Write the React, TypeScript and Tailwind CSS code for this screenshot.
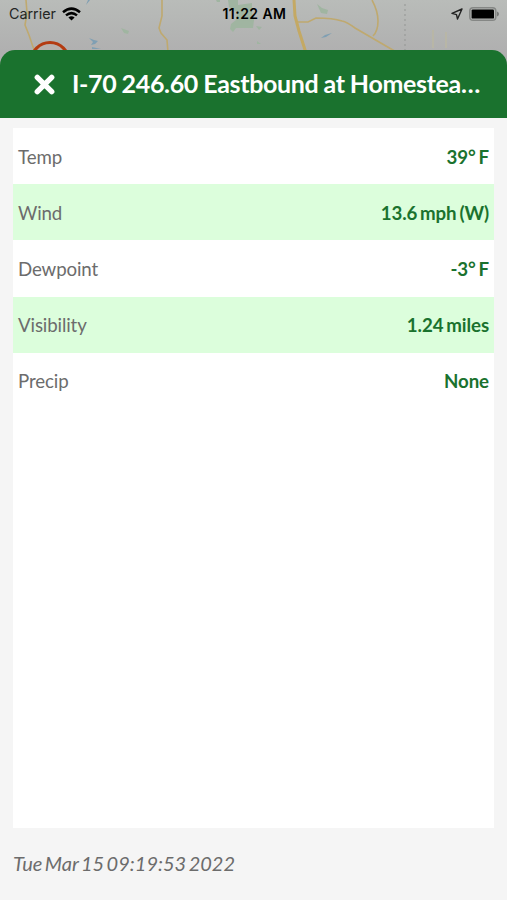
const readings = [
  { label: 'Temp', value: '39° F' },
  { label: 'Wind', value: '13.6 mph (W)' },
  { label: 'Dewpoint', value: '-3° F' },
  { label: 'Visibility', value: '1.24 miles' },
  { label: 'Precip', value: 'None' },
];

function MapBackdrop() {
  return (
    <svg className="absolute inset-0 h-[76px] w-full" viewBox="0 0 507 76" fill="none" aria-hidden="true">
      <defs>
        <linearGradient id="shade" x1="0" y1="0" x2="0" y2="1">
          <stop offset="0" stopColor="#b9bcb9" />
          <stop offset="0.66" stopColor="#b0b0b0" />
        </linearGradient>
      </defs>
      <rect width="507" height="76" fill="url(#shade)" />
      <g fill="#a0b5a1">
        <path d="M228 0h10v5l14-2v10l2 7-1 8h-17l-3 4-3-3 1-5 5-4 1-8-8-5zM216 0h4v2h-3z" />
        <path d="M121 28l8 3-1 3-4-1zM317 4l5 4 6 2-1 4-6-1zM256 26l6 1-3 3zM257 41l4 3h-4z" />
      </g>
      <g stroke="#bfa96f" strokeWidth="1.6">
        <path d="M26 0l1 13-2 12 4 10 4 12 8 15" />
        <path d="M162 0v16l-3 12 2 5 6 7 1 12" />
        <path d="M298 22h10l8-4q17 0 26 3 5 1 13 7l43 25" />
        <path d="M372 0q6 11 6 21 0 10-5 15" />
      </g>
      <path d="M294 0l1 16 4 15 7 22" stroke="#c4a964" strokeWidth="3" />
      <path d="M405 4v52" stroke="#939593" strokeDasharray="2 3" />
      <path d="M433 30v18M446 32v16" stroke="#b8b6a6" strokeWidth="2" />
      <g fill="#7f9fb3">
        <path d="M89 38l5 2 4 1-3 3-4 1 2-3zM321 38l4-3 7-2-6 4zM92 47l9 2h-9zM90 0l-4 5 2-5z" />
      </g>
      <circle cx="50" cy="61.5" r="19" stroke="#b43b10" strokeWidth="3.2" fill="#b7b0ac" />
    </svg>
  );
}

function StatusBar() {
  return (
    <div className="relative flex h-[27px] items-center justify-between pr-[7px] pl-[9px] font-['Inter','Liberation_Sans',sans-serif] text-[14.3px] text-black">
      <div className="flex w-40 items-center gap-[6px]">
        <span className="text-[#242624]">Carrier</span>
        <svg className="h-[14px] w-[19px]" viewBox="0 0 19 14" fill="none" stroke="#000" strokeWidth="2.5" aria-hidden="true">
          <path d="M1 5.2Q9.5-2 18 5.2M4 8.4q5.5-4.6 11 0" />
          <path d="M9.5 13.5L6.4 10.5q3.1-2.5 6.2 0z" fill="#000" stroke="none" />
        </svg>
      </div>
      <span className="text-[14px] font-semibold tracking-[0.45px]">11:22 AM</span>
      <div className="flex w-40 items-center justify-end gap-[6px]">
        <svg className="h-3 w-3" viewBox="0 0 12 12" fill="none" stroke="#222" strokeWidth="1.4" strokeLinejoin="round" aria-hidden="true">
          <path d="M11 1L1 5.4l4.5 1.3L6.5 11z" />
        </svg>
        <svg className="h-[14px] w-[31px]" viewBox="0 0 31 14" fill="none" aria-hidden="true">
          <rect x=".8" y=".8" width="26" height="12.4" rx="3.3" stroke="#858785" strokeWidth="1.5" />
          <rect x="2.6" y="2.4" width="22.4" height="9.2" rx="1.2" fill="#000" />
          <path d="M28 4.6q2 .6 2 2.4t-2 2.4z" fill="#777977" />
        </svg>
      </div>
    </div>
  );
}

export default function App() {
  return (
    <div className="relative flex h-[900px] w-[507px] flex-col overflow-hidden bg-[#f5f5f5] font-['Lato','Liberation_Sans',sans-serif]">
      <MapBackdrop />
      <StatusBar />
      <header className="relative mt-[23px] flex h-[68px] shrink-0 items-center rounded-t-[15px] bg-[#1a722e] pl-[34px] text-white">
        <button type="button" aria-label="Close" className="mr-[17px] flex">
          <svg className="h-[21px] w-[21px]" viewBox="0 0 21 21" stroke="currentColor" strokeWidth="5.4" strokeLinecap="round" aria-hidden="true">
            <path d="M3.3 3.3l14.4 14.4M17.7 3.3L3.3 17.7" />
          </svg>
        </button>
        <h1 className="pb-[3px] text-[25px] leading-8 font-bold tracking-[-0.33px] whitespace-nowrap [word-spacing:-0.6px]">I-70 246.60 Eastbound at Homestea…</h1>
      </header>
      <main className="relative mx-[13px] mt-[10px] h-[700px] bg-white">
        {readings.map(({ label, value }) => (
          <div key={label} className="flex h-[56.2px] items-center justify-between px-[5px] pt-px text-[18.7px] even:bg-[#dcfedc]">
            <span className="tracking-[-0.12px] text-[#6c6c6c]">{label}</span>
            <span className="font-bold tracking-[-0.1px] text-[#1a722e] [word-spacing:-1.6px]">{value}</span>
          </div>
        ))}
      </main>
      <footer className="px-[13px] pt-[21px] text-[20px] leading-7 text-[#6c6c6c] italic [word-spacing:-2.2px]">Tue Mar 15 09:19:53 2022</footer>
    </div>
  );
}
